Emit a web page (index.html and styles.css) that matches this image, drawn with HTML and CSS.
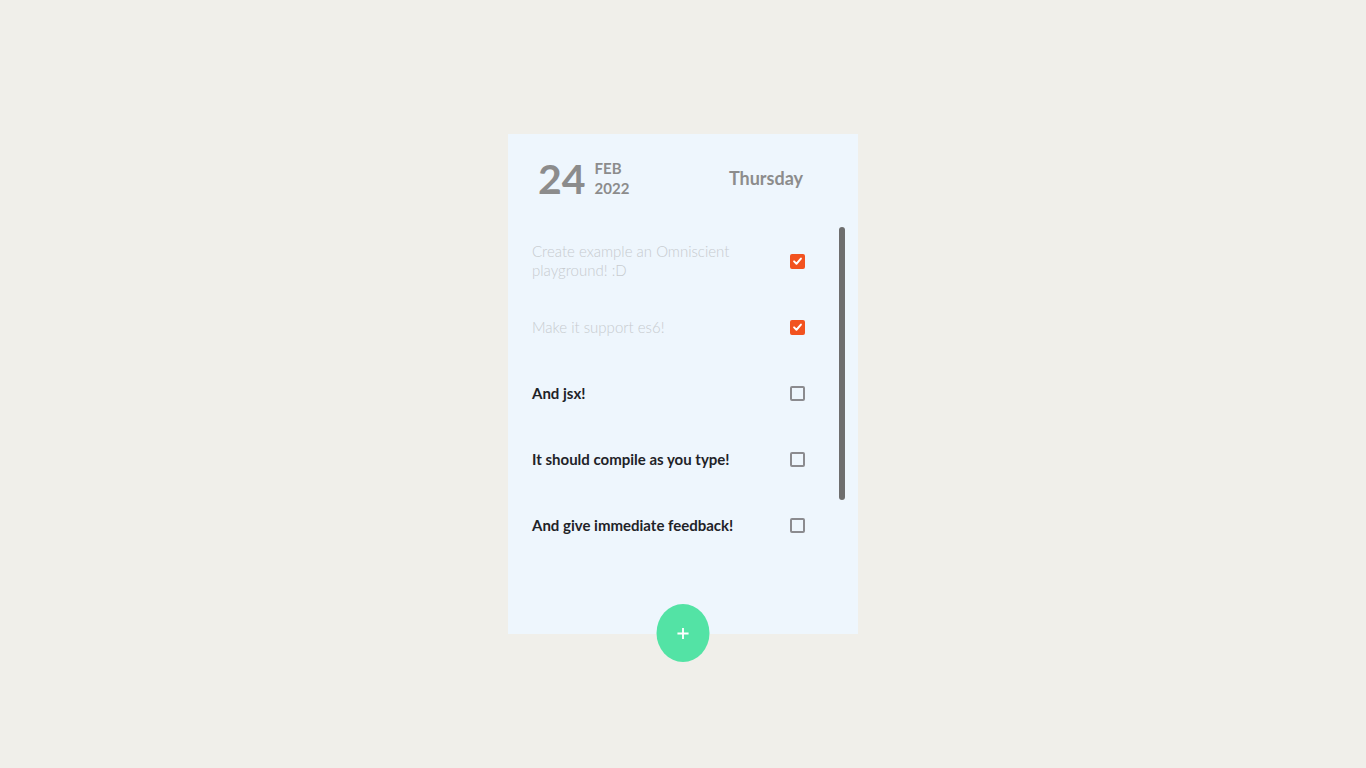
FILE: index.html
```html
<!DOCTYPE html>
<html lang="en">
<head>
<meta charset="utf-8">
<title>Todo</title>
<link rel="stylesheet" href="styles.css">
</head>
<body>
<div class="card">
  <div class="header">
    <div class="date">
      <span class="day">24</span>
      <span class="monthyear"><span>FEB</span><span>2022</span></span>
    </div>
    <div class="weekday">Thursday</div>
  </div>
  <ul class="list">
    <li class="item done"><span class="text">Create example an Omniscient playground! :D</span><span class="check checked"><svg viewBox="0 0 16 16" width="12" height="12"><path d="M3 8.5 L6.5 12 L13 4.5" fill="none" stroke="#fff" stroke-width="2.8" stroke-linecap="round" stroke-linejoin="round"/></svg></span></li>
    <li class="item done"><span class="text">Make it support es6!</span><span class="check checked"><svg viewBox="0 0 16 16" width="12" height="12"><path d="M3 8.5 L6.5 12 L13 4.5" fill="none" stroke="#fff" stroke-width="2.8" stroke-linecap="round" stroke-linejoin="round"/></svg></span></li>
    <li class="item"><span class="text">And jsx!</span><span class="check"></span></li>
    <li class="item"><span class="text">It should compile as you type!</span><span class="check"></span></li>
    <li class="item"><span class="text">And give immediate feedback!</span><span class="check"></span></li>
  </ul>
  <div class="thumb"></div>
  <button class="add"><svg viewBox="0 0 14 14" width="13" height="13"><path d="M7 1 V13 M1 7 H13" stroke="#fff" stroke-width="2" fill="none"/></svg></button>
</div>
</body>
</html>
```
FILE: styles.css
```css
html, body {
  margin: 0;
  padding: 0;
}
body {
  background: #f0efea;
  font-family: Lato, "Open Sans", sans-serif;
  padding-top: 134px;
  min-height: 100vh;
  box-sizing: border-box;
}
.card {
  position: relative;
  width: 350px;
  height: 500px;
  margin: 0 auto;
  background: #eef6fd;
  box-sizing: border-box;
}
.header {
  height: 94px;
  display: flex;
  align-items: center;
  justify-content: space-between;
  padding: 0 55px 6px 30px;
  box-sizing: border-box;
  color: #8c8c8c;
}
.date {
  display: flex;
  align-items: center;
}
.day {
  font-size: 41px;
  font-weight: 700;
  line-height: 1;
}
.monthyear {
  display: flex;
  flex-direction: column;
  margin-left: 9px;
  font-size: 15px;
  font-weight: 700;
  line-height: 20px;
}
.weekday {
  font-size: 18px;
  font-weight: 700;
}
.list {
  list-style: none;
  margin: 0;
  padding: 0;
}
.item {
  height: 66px;
  display: flex;
  align-items: center;
  justify-content: space-between;
  padding: 0 53px 0 24px;
  box-sizing: border-box;
}
.text {
  width: 215px;
  font-size: 15px;
  line-height: 19px;
  font-weight: 700;
  color: #1f2328;
}
.done .text {
  font-weight: 300;
  color: #c7cbcf;
}
.check {
  width: 15px;
  height: 15px;
  box-sizing: border-box;
  border: 2px solid #8b8b8f;
  border-radius: 2px;
  display: flex;
  align-items: center;
  justify-content: center;
}
.check.checked {
  background: #f2521f;
  border-color: #f2521f;
}
.thumb {
  position: absolute;
  left: 331px;
  top: 93px;
  width: 6px;
  height: 273px;
  border-radius: 3px;
  background: #6e6e6e;
}
.add {
  position: absolute;
  z-index: 2;
  left: 50%;
  bottom: -28px;
  transform: translateX(-50%);
  width: 53px;
  height: 58px;
  border-radius: 50%;
  border: none;
  background: #53e3a5;
  padding: 0;
  display: flex;
  align-items: center;
  justify-content: center;
}
```
